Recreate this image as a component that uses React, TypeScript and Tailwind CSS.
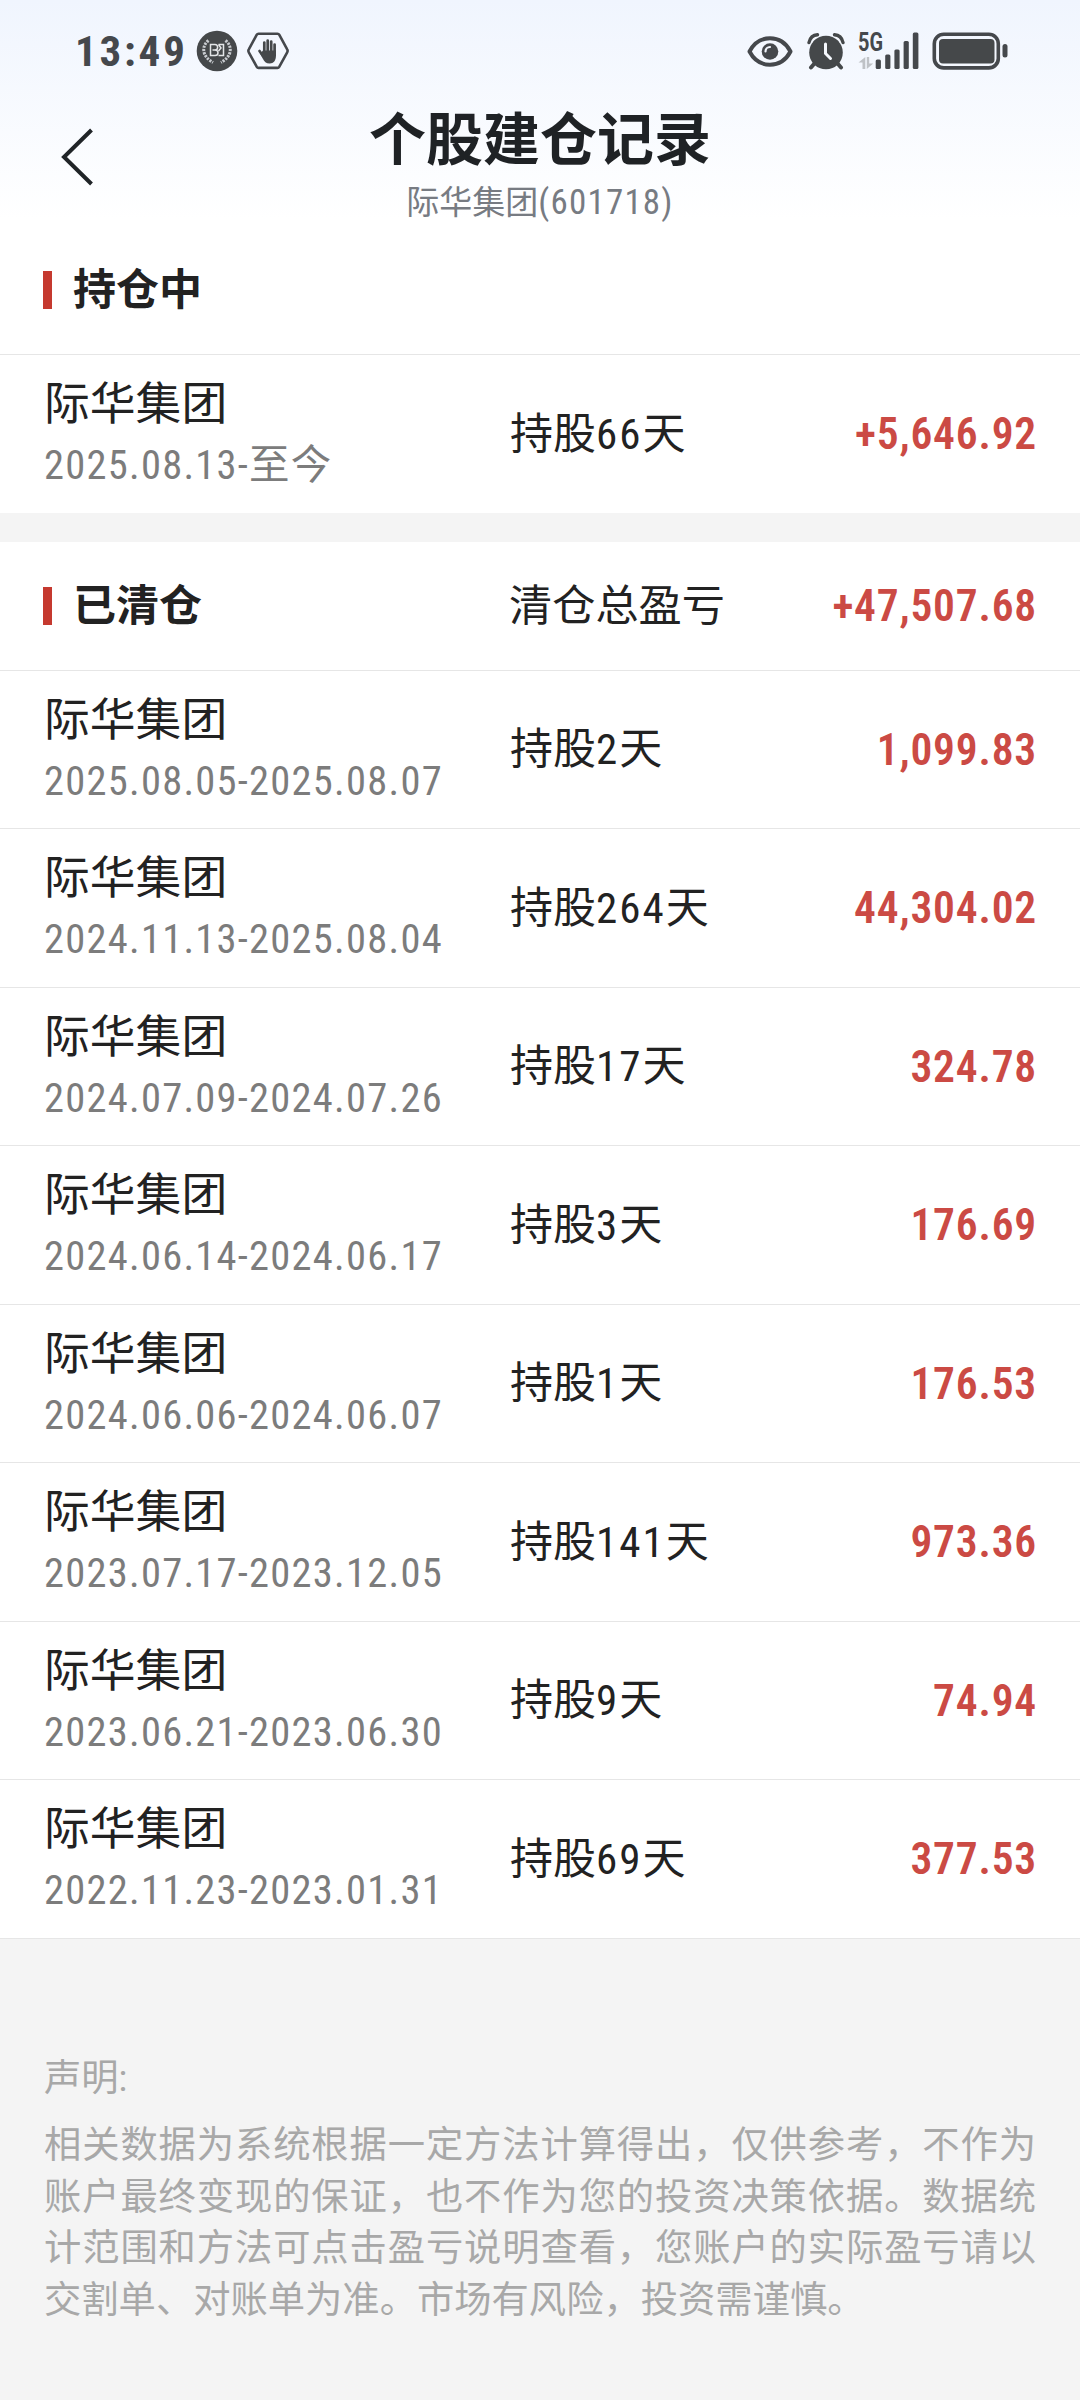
interface PositionRecord {
  name: string
  period: string
  days: number
  profit: string
}

const holding: PositionRecord[] = [
  { name: '际华集团', period: '2025.08.13-至今', days: 66, profit: '+5,646.92' },
]

const cleared: PositionRecord[] = [
  { name: '际华集团', period: '2025.08.05-2025.08.07', days: 2, profit: '1,099.83' },
  { name: '际华集团', period: '2024.11.13-2025.08.04', days: 264, profit: '44,304.02' },
  { name: '际华集团', period: '2024.07.09-2024.07.26', days: 17, profit: '324.78' },
  { name: '际华集团', period: '2024.06.14-2024.06.17', days: 3, profit: '176.69' },
  { name: '际华集团', period: '2024.06.06-2024.06.07', days: 1, profit: '176.53' },
  { name: '际华集团', period: '2023.07.17-2023.12.05', days: 141, profit: '973.36' },
  { name: '际华集团', period: '2023.06.21-2023.06.30', days: 9, profit: '74.94' },
  { name: '际华集团', period: '2022.11.23-2023.01.31', days: 69, profit: '377.53' },
]

function BadgeIcon() {
  return (
    <svg width="42" height="42" viewBox="0 0 42 42" fill="none">
      <circle cx="21" cy="21" r="20.3" fill="#45484a" />
      <g stroke="#c9ccd0" strokeWidth="3" strokeDasharray="2.2 1.1">
        <path d="M12.5 10.5C5.5 16 5.5 26 17 32.5" />
        <path d="M29.5 10.5C36.5 16 36.5 26 25 32.5" />
      </g>
      <g stroke="#e4e6e8" strokeWidth="1.5">
        <path d="M14.5 14.5v11h4.5c4 0 4-5.5 0-5.5h-2.5 2.5c3.5 0 3.5-5.5 0-5.5z" />
        <path d="M22.5 14.5h5v11h-5M22.5 14.5l2.5 3.5-2.5 3" />
      </g>
    </svg>
  )
}

function HandIcon() {
  return (
    <svg width="42" height="38" viewBox="0 0 42 38" fill="none">
      <path
        d="M11.5 1.7h19a2 2 0 0 1 1.7 1l8 14.6a3 3 0 0 1 0 3l-8 14.6a2 2 0 0 1-1.7 1h-19a2 2 0 0 1-1.7-1l-8-14.6a3 3 0 0 1 0-3l8-14.6a2 2 0 0 1 1.7-1z"
        stroke="#45484c"
        strokeWidth="2.6"
      />
      <g stroke="#45484a" strokeWidth="2.7" strokeLinecap="round">
        <path d="M17.3 20V10.5M20.7 20V8.5M24.2 20V9.5M27.6 21v-8.5M12.5 19l3.5 5" />
      </g>
      <path d="M16 18.5h13v5c0 5-2.5 8-6.3 8-3.7 0-5.5-2-7-5l-2.5-5z" fill="#45484a" />
    </svg>
  )
}

function EyeIcon() {
  return (
    <svg width="46" height="31" viewBox="0 0 46 31" fill="none">
      <path
        d="M2.5 15.5C7 7 14 2.3 23 2.3S39 7 43.5 15.5C39 24 32 28.7 23 28.7S7 24 2.5 15.5z"
        stroke="#45484c"
        strokeWidth="4"
        strokeLinejoin="round"
      />
      <circle cx="23" cy="15.5" r="8.3" fill="#45484c" />
      <path d="M18.5 15.5a4.5 4.5 0 0 1 4.5-4.5" stroke="#f3f6fd" strokeWidth="2.2" strokeLinecap="round" />
    </svg>
  )
}

function AlarmIcon() {
  return (
    <svg width="38" height="37" viewBox="0 0 38 37" fill="none">
      <circle cx="19" cy="19.5" r="16.8" fill="#45484a" />
      <path d="M2 9.5C3 5 6 2 10.5 1.7M36 9.5C35 5 32 2 27.5 1.7" stroke="#f5f8fd" strokeWidth="6.5" />
      <path d="M2 9.5C3 5 6 2 10.5 1.7M36 9.5C35 5 32 2 27.5 1.7" stroke="#45484a" strokeWidth="3.4" strokeLinecap="round" />
      <path d="M7 31l-3 3.5M31 31l3 3.5" stroke="#45484a" strokeWidth="4" strokeLinecap="round" />
      <path d="M18.5 11v9.5l5 5" stroke="#f5f8fd" strokeWidth="3" strokeLinecap="round" />
    </svg>
  )
}

function SignalIcon() {
  return (
    <svg width="62" height="54" viewBox="0 -8 62 54">
      <text
        x="0"
        y="18.5"
        textLength="25"
        lengthAdjust="spacingAndGlyphs"
        fontSize="25"
        fontWeight="700"
        fontFamily="Roboto, sans-serif"
        fill="#45484c"
      >
        5G
      </text>
      <path d="M7.3 25v12H4.5v-6.5h-4zM8.8 37V25h2.4v6.5h4z" fill="#bfc2c6" />
      <g fill="#45484c">
        <rect x="17.7" y="27.5" width="5.2" height="9.5" rx="1.5" />
        <rect x="27.2" y="22.5" width="5.2" height="14.5" rx="1.5" />
        <rect x="36.4" y="17.5" width="5.2" height="19.5" rx="1.5" />
        <rect x="45.6" y="9" width="5.2" height="28" rx="1.5" />
        <rect x="54.8" y="0.5" width="5.6" height="36.5" rx="1.5" />
      </g>
    </svg>
  )
}

function BatteryIcon() {
  return (
    <svg width="77" height="38" viewBox="0 0 77 38" fill="none">
      <rect x="2.3" y="2.3" width="64" height="33.6" rx="9.5" stroke="#45484c" strokeWidth="3.6" />
      <rect x="7" y="7" width="55.5" height="24.5" rx="4" fill="#45484a" />
      <rect x="70.5" y="12" width="5" height="13.5" rx="2.5" fill="#45484c" />
    </svg>
  )
}

function StatusBar() {
  return (
    <div className="flex h-[102px] items-center justify-between pr-[71px] pl-[75px]">
      <div className="flex items-center">
        <span className="w-[121px] text-[43px] leading-[50px] font-bold tracking-[2.8px] text-[#45484c] font-stretch-condensed">
          13:49
        </span>
        <BadgeIcon />
        <div className="ml-[9px]">
          <HandIcon />
        </div>
      </div>
      <div className="flex items-center">
        <EyeIcon />
        <div className="ml-[14px]">
          <AlarmIcon />
        </div>
        <div className="ml-[13px]">
          <SignalIcon />
        </div>
        <div className="ml-[12px]">
          <BatteryIcon />
        </div>
      </div>
    </div>
  )
}

function Header() {
  return (
    <header className="grid h-[124px] grid-cols-[200px_1fr_200px] items-start">
      <button type="button" aria-label="返回" className="pt-[26px] pl-[60px]">
        <svg width="34" height="58" viewBox="0 0 34 58" fill="none">
          <path d="M31.5 2L4 29l27.5 27" stroke="#202427" strokeWidth="4" />
        </svg>
      </button>
      <div className="flex flex-col items-center pt-[2px]">
        <h1 className="h-[74px] text-[57px] leading-[74px] font-bold text-[#1f2225]">个股建仓记录</h1>
        <p className="text-[33px] leading-[50px] text-[#777b82]">
          际华集团<span className="text-[35px] tracking-[1.2px] font-stretch-condensed">(601718)</span>
        </p>
      </div>
    </header>
  )
}

function SectionTitle({ title }: { title: string }) {
  return (
    <div className="flex w-[466px] items-center">
      <span className="h-[38px] w-[9px] bg-[#c5392f]" />
      <h2 className="ml-[21px] text-[43px] leading-[60px] font-bold text-[#222222]">{title}</h2>
    </div>
  )
}

function Profit({ value }: { value: string }) {
  return (
    <span className="ml-auto pt-[3px] text-[43.5px] leading-[60px] font-semibold tracking-[0.8px] text-[#cb4a44] font-stretch-condensed">
      {value}
    </span>
  )
}

function RecordRow({ record }: { record: PositionRecord }) {
  return (
    <li className="flex h-[158.5px] items-center border-b border-[#e6e6e6] pr-[43px] pl-[44px]">
      <div className="w-[466px] pt-[2px]">
        <p className="text-[45.8px] leading-[61px] text-[#222222]">{record.name}</p>
        <p className="text-[40.5px] leading-[60px] tracking-[1.25px] text-[#7c7c7c] font-stretch-condensed">{record.period}</p>
      </div>
      <p className="text-[43px] leading-[60px] text-[#222222]">
        持股<span className="tracking-[2px] font-stretch-condensed">{record.days}</span>天
      </p>
      <Profit value={record.profit} />
    </li>
  )
}

export default function App() {
  return (
    <div className="flex h-[2400px] w-[1080px] flex-col overflow-hidden bg-[#f4f4f4] font-[Roboto,'Noto_Sans_CJK_SC',sans-serif]">
      <div className="h-[354px] bg-linear-to-b from-[#f0f5fe] to-white to-[220px]">
        <StatusBar />
        <Header />
        <div className="flex h-[128px] items-center pl-[43px]">
          <SectionTitle title="持仓中" />
        </div>
      </div>
      <ul className="h-[159px] overflow-hidden border-t border-[#e6e6e6] bg-white">
        {holding.map((record) => (
          <RecordRow key={record.period} record={record} />
        ))}
      </ul>
      <section className="mt-[29px] bg-white">
        <div className="flex h-[128.5px] items-center border-b border-[#e6e6e6] pr-[43px] pl-[43px]">
          <SectionTitle title="已清仓" />
          <p className="pt-[2px] text-[43.2px] leading-[60px] text-[#222222]">清仓总盈亏</p>
          <Profit value="+47,507.68" />
        </div>
        <ul>
          {cleared.map((record) => (
            <RecordRow key={record.period} record={record} />
          ))}
        </ul>
      </section>
      <footer className="px-[44px] pt-[114px] text-[37.3px] leading-[51.6px] text-[#a8a8a8]">
        <p className="mb-[16px]">声明:</p>
        <p className="text-justify">
          相关数据为系统根据一定方法计算得出，仅供参考，不作为账户最终变现的保证，也不作为您的投资决策依据。数据统计范围和方法可点击盈亏说明查看，您账户的实际盈亏请以交割单、对账单为准。市场有风险，投资需谨慎。
        </p>
      </footer>
    </div>
  )
}
